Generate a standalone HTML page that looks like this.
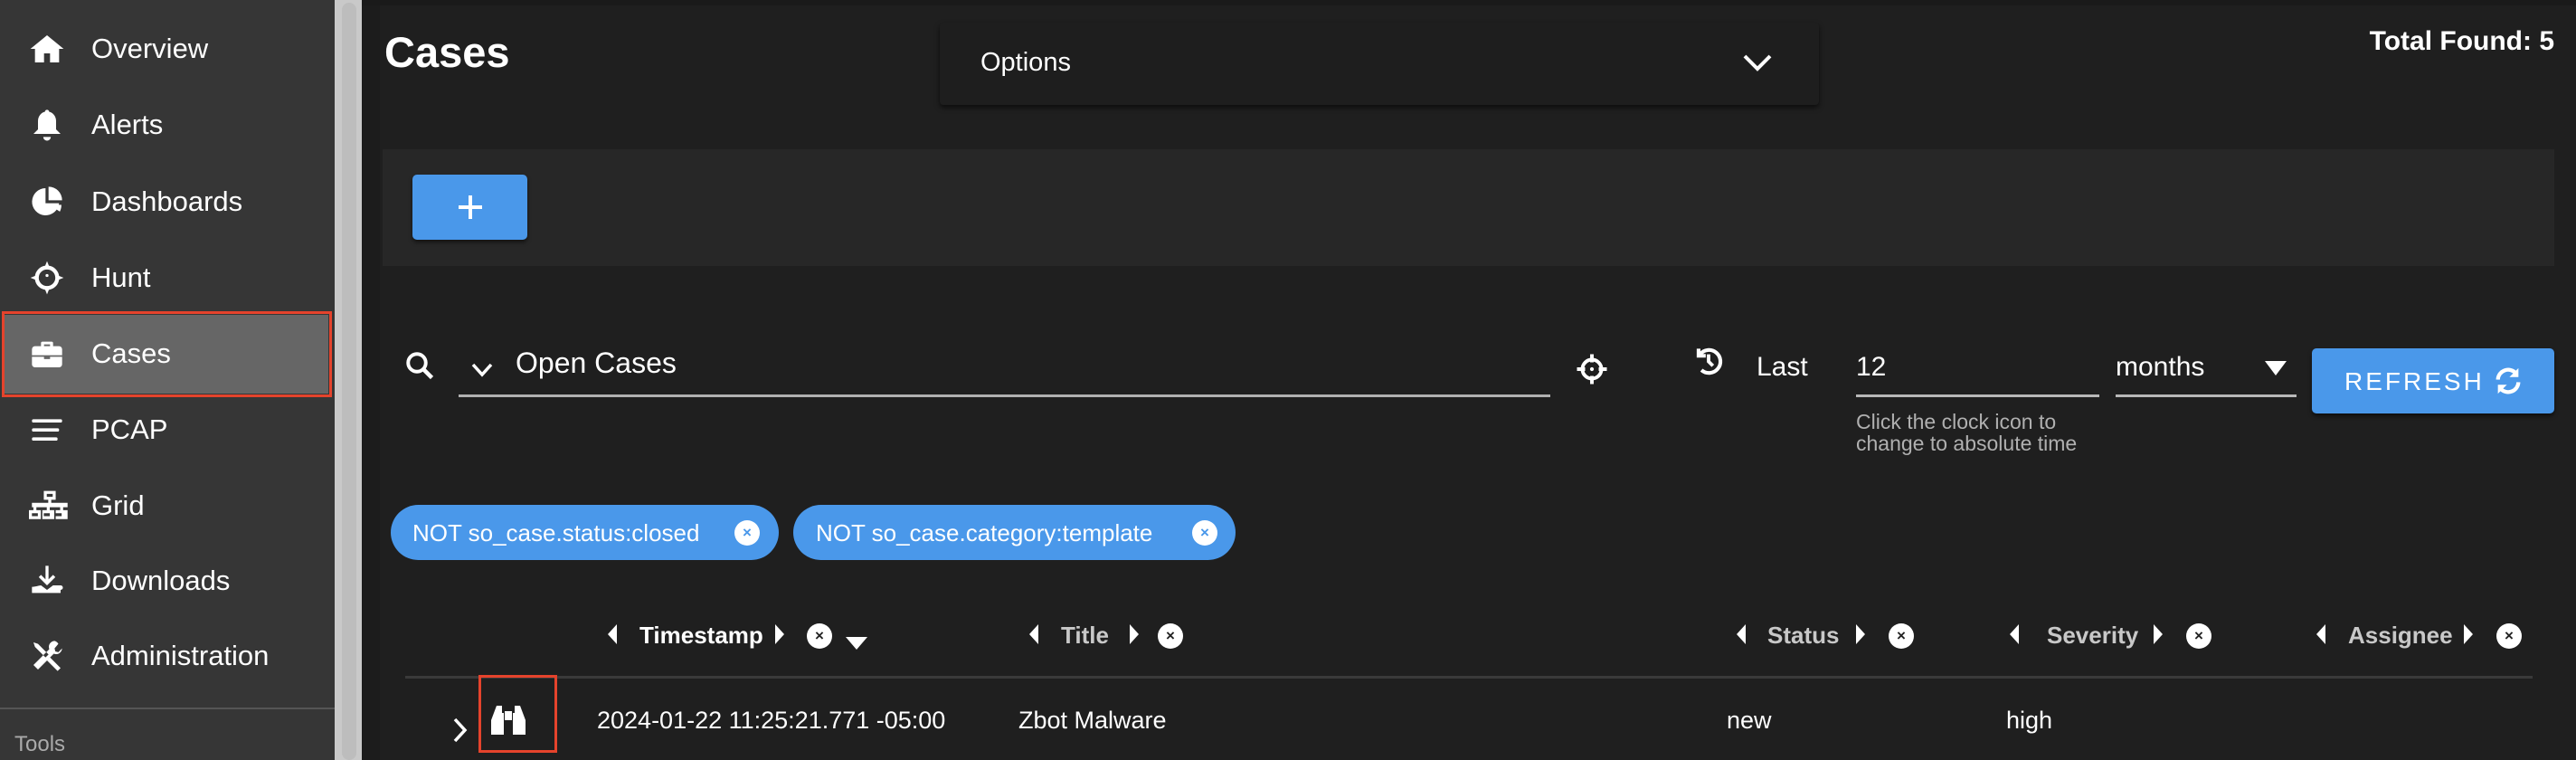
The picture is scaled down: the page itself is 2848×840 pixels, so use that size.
<!DOCTYPE html>
<html><head><meta charset="utf-8"><style>
*{margin:0;padding:0;box-sizing:border-box}
body{width:2848px;height:840px;overflow:hidden;background:#1f1f1f;font-family:"Liberation Sans",Arial,sans-serif;color:#fff;position:relative}
.a{position:absolute}
.side{left:0;top:0;width:370px;height:840px;background:#363636}
.nav{position:absolute;left:0;width:370px;height:84px}
.nav svg{position:absolute;left:32px;top:22px;width:40px;height:40px;fill:#fff}
.nav span{position:absolute;left:101px;top:26px;font-size:31px;color:#fff;line-height:1}
.t{position:absolute;white-space:nowrap;line-height:1}
.hd{font-weight:bold;font-size:26px;color:#c8c8c8}
.x{position:absolute;width:28px;height:28px;border-radius:50%;background:#fff;color:#222;font-size:17px;font-weight:bold;text-align:center;line-height:28px}
.tri{position:absolute}
</style></head><body>
<div class="a side"></div>
<div class="a" style="left:370px;top:0;width:30px;height:840px;background:#c9c9c9"></div>
<div class="a" style="left:378px;top:3px;width:16px;height:837px;background:#bdbdbd;border-radius:8px"></div>
<div class="a" style="left:400px;top:0;width:20px;height:840px;background:#1c1c1c"></div>
<div class="a" style="left:400px;top:0;width:2448px;height:6px;background:#1a1a1a"></div>

<div class="a" style="left:5px;top:348px;width:358px;height:87px;background:#666"></div>
<div class="a" style="left:2px;top:344px;width:365px;height:95px;border:3px solid #e5432c"></div>

<div class="nav" style="top:12px"><svg viewBox="0 0 24 24"><path d="M12 3L1 12h3v9h6v-6h4v6h6v-9h3z"/></svg><span>Overview</span></div>
<div class="nav" style="top:96px"><svg viewBox="0 0 24 24"><path d="M12 2c-.8 0-1.4.6-1.4 1.3C7.8 4 6 6.5 6 9.5V15l-3 3h18l-3-3V9.5c0-3-1.8-5.5-4.6-6.2C13.4 2.6 12.8 2 12 2zM9.5 20a2.5 2.5 0 0 0 5 0z"/></svg><span>Alerts</span></div>
<div class="nav" style="top:181px"><svg viewBox="0 0 24 24"><path d="M11 3a9 9 0 1 0 9 10h-9zM13 2v9h9a9 9 0 0 0-9-9zM13.5 14l7 4.5A9 9 0 0 0 21.5 14z"/></svg><span>Dashboards</span></div>
<div class="nav" style="top:265px"><svg viewBox="0 0 24 24"><path d="M12 1l1.2 3A8 8 0 0 1 20 10.8l3 1.2-3 1.2A8 8 0 0 1 13.2 20L12 23l-1.2-3A8 8 0 0 1 4 13.2L1 12l3-1.2A8 8 0 0 1 10.8 4zm0 5.5a5.5 5.5 0 1 0 0 11 5.5 5.5 0 0 0 0-11zM12 9.5a1 1 0 1 1 0 2 1 1 0 0 1 0-2z"/></svg><span>Hunt</span></div>
<div class="nav" style="top:349px"><svg viewBox="0 0 24 24"><path d="M9 4h6a1 1 0 0 1 1 1v2h4a2 2 0 0 1 2 2v4H2V9a2 2 0 0 1 2-2h4V5a1 1 0 0 1 1-1zm1 1.8V7h4V5.8zM2 14h8v1.5h4V14h8v5a2 2 0 0 1-2 2H4a2 2 0 0 1-2-2z"/></svg><span>Cases</span></div>
<div class="nav" style="top:433px"><svg viewBox="0 0 24 24"><rect x="2" y="5" width="20" height="2.2" rx="1"/><rect x="2" y="11" width="18" height="2.2" rx="1"/><rect x="2" y="17" width="17" height="2.2" rx="1"/></svg><span>PCAP</span></div>
<div class="nav" style="top:517px"><svg viewBox="0 0 28 24" style="width:46px"><path d="M10 2h8v6h-3v2h11v3h-3v2h3v6h-8v-6h3v-2h-7v2h3v6h-8v-6h3v-2H5v2h3v6H0v-6h3v-2H2v-3h11V8h-3zm2 2v2h4V4zM2 17v2h4v-2zm8 0v2h4v-2zm8 0v2h4v-2z"/></svg><span>Grid</span></div>
<div class="nav" style="top:600px"><svg viewBox="0 0 24 24"><path d="M11 2h2v9l3-3 1.5 1.5L12 15 6.5 9.5 8 8l3 3zM2 16c2 0 5-1 6-1l4 3 4-3h5a1.5 1.5 0 0 1 0 3v2H2z"/></svg><span>Downloads</span></div>
<div class="nav" style="top:683px"><svg viewBox="0 0 24 24"><path d="M3 3l3 1 7 7-2 2-7-7zM14 13l7 7-2 2-7-7zM17 2a4 4 0 0 0-3.5 5.5L3 18l3 3 10.5-10.5A4 4 0 0 0 22 7l-2.5 2.5-2-.5-.5-2L19.5 4A4 4 0 0 0 17 2z"/></svg><span>Administration</span></div>
<div class="a" style="left:0;top:782px;width:370px;height:2px;background:#555"></div>
<div class="t" style="left:16px;top:811px;font-size:24px;color:#aaa">Tools</div>

<div class="t" style="left:425px;top:34px;font-size:47px;font-weight:bold">Cases</div>
<div class="a" style="left:1039px;top:25px;width:972px;height:91px;background:#1e1e1e;border-radius:4px;box-shadow:0 3px 6px rgba(0,0,0,.6)"></div>
<div class="t" style="left:1084px;top:55px;font-size:29px">Options</div>
<svg class="a" style="left:1926px;top:58px" width="34" height="22" viewBox="0 0 34 22"><path d="M3 4l14 14L31 4" stroke="#fff" stroke-width="4" fill="none"/></svg>
<div class="t" style="right:24px;top:31px;font-size:30px;font-weight:bold">Total Found: 5</div>

<div class="a" style="left:423px;top:165px;width:2401px;height:129px;background:#272727"></div>
<div class="a" style="left:456px;top:193px;width:127px;height:72px;background:#4a98ea;border-radius:5px;box-shadow:0 3px 4px rgba(0,0,0,.5)"></div>
<div class="a" style="left:507px;top:227px;width:26px;height:4px;background:#fff"></div>
<div class="a" style="left:518px;top:216px;width:4px;height:26px;background:#fff"></div>

<svg class="a" style="left:446px;top:385px" width="36" height="38" viewBox="0 0 24 24"><circle cx="10" cy="10" r="6.5" stroke="#fff" stroke-width="2.6" fill="none"/><path d="M15 15l6 6" stroke="#fff" stroke-width="3"/></svg>
<svg class="a" style="left:520px;top:400px" width="26" height="18" viewBox="0 0 26 18"><path d="M3 3l10 11L23 3" stroke="#fff" stroke-width="3.5" fill="none"/></svg>
<div class="t" style="left:570px;top:385px;font-size:32px">Open Cases</div>
<div class="a" style="left:507px;top:436px;width:1207px;height:3px;background:#b0b0b0"></div>
<svg class="a" style="left:1742px;top:390px" width="36" height="36" viewBox="0 0 24 24"><circle cx="12" cy="12" r="7" stroke="#fff" stroke-width="2.6" fill="none"/><path d="M12 1v6M12 17v6M1 12h6M17 12h6" stroke="#fff" stroke-width="2.6"/><circle cx="12" cy="12" r="1.4" fill="#fff"/></svg>

<svg class="a" style="left:1870px;top:378px" width="38" height="40" viewBox="0 0 24 24"><path d="M5 4v5h5" stroke="#fff" stroke-width="2.6" fill="none"/><path d="M6 8A8 8 0 1 1 7 19" stroke="#fff" stroke-width="2.6" fill="none"/><path d="M12 8v5l3 3" stroke="#fff" stroke-width="2.4" fill="none"/></svg>
<div class="t" style="left:1942px;top:391px;font-size:30px">Last</div>
<div class="t" style="left:2052px;top:391px;font-size:30px">12</div>
<div class="a" style="left:2052px;top:436px;width:269px;height:3px;background:#b8b8b8"></div>
<div class="t" style="left:2052px;top:454px;font-size:23px;color:#b0b0b0;line-height:24px;white-space:normal;width:300px">Click the clock icon to<br>change to absolute time</div>
<div class="t" style="left:2339px;top:391px;font-size:30px">months</div>
<svg class="a" style="left:2503px;top:398px" width="26" height="18" viewBox="0 0 26 18"><path d="M1 1h24L13 17z" fill="#fff"/></svg>
<div class="a" style="left:2339px;top:436px;width:200px;height:3px;background:#b8b8b8"></div>
<div class="a" style="left:2556px;top:385px;width:268px;height:72px;background:#4a98ea;border-radius:5px;box-shadow:0 3px 4px rgba(0,0,0,.5)"></div>
<div class="t" style="left:2592px;top:408px;font-size:28px;letter-spacing:3px">REFRESH</div>
<svg class="a" style="left:2756px;top:403px" width="34" height="36" viewBox="0 0 24 24"><path d="M4 11a8 8 0 0 1 14-5" stroke="#fff" stroke-width="3" fill="none"/><path d="M20 2v7h-7z" fill="#fff"/><path d="M20 13a8 8 0 0 1-14 5" stroke="#fff" stroke-width="3" fill="none"/><path d="M4 22v-7h7z" fill="#fff"/></svg>

<div class="a" style="left:432px;top:558px;width:429px;height:61px;background:#4a98ea;border-radius:31px"></div>
<div class="t" style="left:456px;top:576px;font-size:26px">NOT so_case.status:closed</div>
<div class="x" style="left:812px;top:575px;color:#4a98ea">×</div>
<div class="a" style="left:877px;top:558px;width:489px;height:61px;background:#4a98ea;border-radius:31px"></div>
<div class="t" style="left:902px;top:576px;font-size:26px">NOT so_case.category:template</div>
<div class="x" style="left:1318px;top:575px;color:#4a98ea">×</div>

<svg class="tri" style="left:672px;top:690px" width="10" height="22"><path d="M10 0v22L0 11z" fill="#fff"/></svg>
<div class="t hd" style="left:707px;top:689px;color:#fff">Timestamp</div>
<svg class="tri" style="left:857px;top:690px" width="10" height="22"><path d="M0 0v22l10-11z" fill="#fff"/></svg>
<div class="x" style="left:892px;top:689px">×</div>
<svg class="tri" style="left:935px;top:704px" width="24" height="14"><path d="M0 0h24L12 14z" fill="#fff"/></svg>

<svg class="tri" style="left:1138px;top:690px" width="10" height="22"><path d="M10 0v22L0 11z" fill="#fff"/></svg>
<div class="t hd" style="left:1173px;top:689px">Title</div>
<svg class="tri" style="left:1249px;top:690px" width="10" height="22"><path d="M0 0v22l10-11z" fill="#fff"/></svg>
<div class="x" style="left:1280px;top:689px">×</div>

<svg class="tri" style="left:1920px;top:690px" width="10" height="22"><path d="M10 0v22L0 11z" fill="#fff"/></svg>
<div class="t hd" style="left:1954px;top:689px">Status</div>
<svg class="tri" style="left:2052px;top:690px" width="10" height="22"><path d="M0 0v22l10-11z" fill="#fff"/></svg>
<div class="x" style="left:2088px;top:689px">×</div>

<svg class="tri" style="left:2222px;top:690px" width="10" height="22"><path d="M10 0v22L0 11z" fill="#fff"/></svg>
<div class="t hd" style="left:2263px;top:689px">Severity</div>
<svg class="tri" style="left:2381px;top:690px" width="10" height="22"><path d="M0 0v22l10-11z" fill="#fff"/></svg>
<div class="x" style="left:2417px;top:689px">×</div>

<svg class="tri" style="left:2561px;top:690px" width="10" height="22"><path d="M10 0v22L0 11z" fill="#fff"/></svg>
<div class="t hd" style="left:2596px;top:689px">Assignee</div>
<svg class="tri" style="left:2724px;top:690px" width="10" height="22"><path d="M0 0v22l10-11z" fill="#fff"/></svg>
<div class="x" style="left:2760px;top:689px">×</div>

<div class="a" style="left:448px;top:747px;width:2352px;height:3px;background:#3a3a3a"></div>

<svg class="a" style="left:500px;top:792px" width="18" height="30" viewBox="0 0 18 30"><path d="M3 3l11 12L3 27" stroke="#fff" stroke-width="3.5" fill="none"/></svg>
<svg class="a" style="left:543px;top:778px" width="38" height="36" viewBox="0 0 38 36"><path d="M6 2h6v8h2v24H0V18zM26 2h6l6 16v16H24V10h2zM15 8h8v10h-8z" fill="#fff"/></svg>
<div class="a" style="left:529px;top:746px;width:87px;height:86px;border:3px solid #e5432c"></div>
<div class="t" style="left:660px;top:783px;font-size:27px">2024-01-22 11:25:21.771 -05:00</div>
<div class="t" style="left:1126px;top:783px;font-size:27px">Zbot Malware</div>
<div class="t" style="left:1909px;top:783px;font-size:27px">new</div>
<div class="t" style="left:2218px;top:783px;font-size:27px">high</div>
</body></html>
